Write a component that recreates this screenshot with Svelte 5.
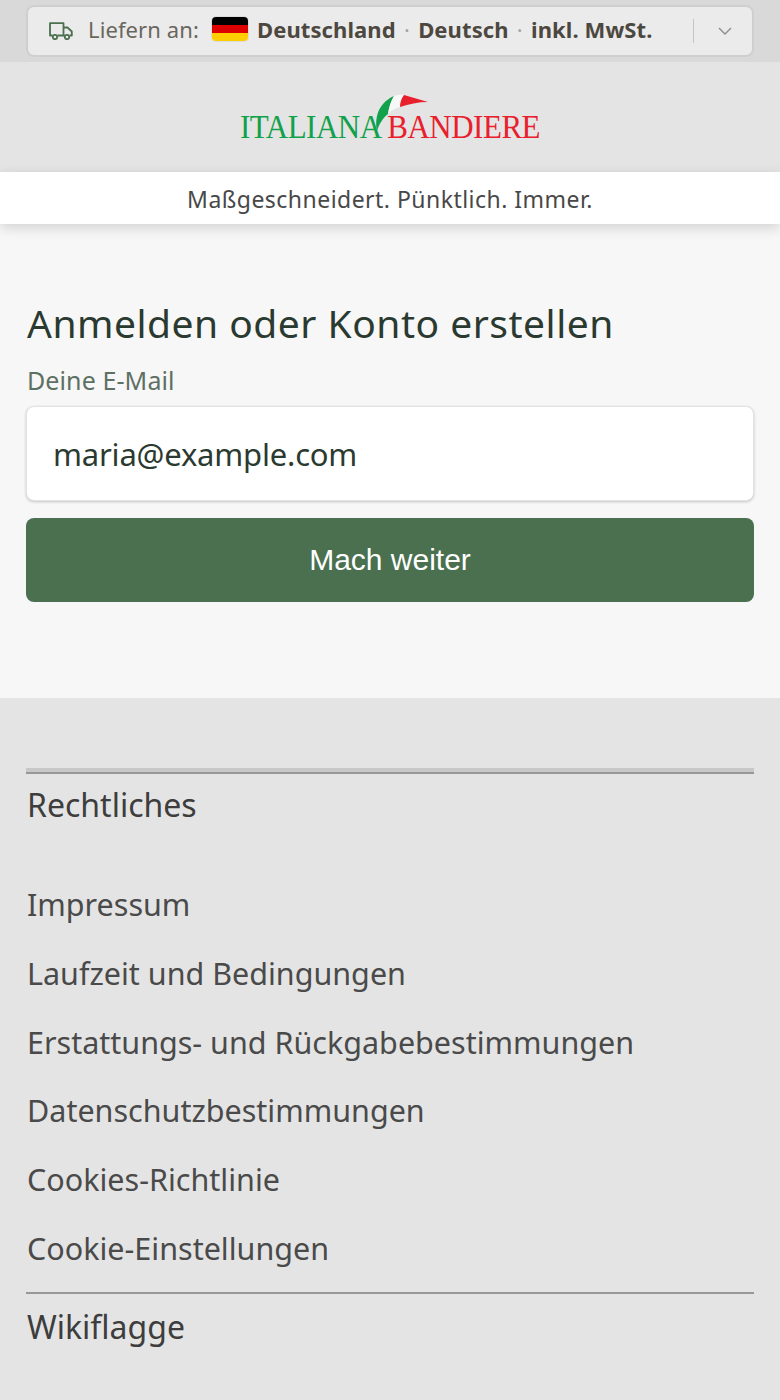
<script lang="ts">
	const legalLinks = [
		'Impressum',
		'Laufzeit und Bedingungen',
		'Erstattungs- und Rückgabebestimmungen',
		'Datenschutzbestimmungen',
		'Cookies-Richtlinie',
		'Cookie-Einstellungen',
	];
</script>

<div class="page">
	<div class="topbar">
		<div class="locale">
			<svg class="truck" viewBox="0 0 24 18" width="24" height="18" fill="none" stroke="#4a7050" stroke-width="1.8" stroke-linejoin="round">
				<path d="M3.6 13.5H1V1.2H14.5V13.5H8.6" />
				<path d="M14.5 5.5H18.5L22.8 9.5V13.5H20.6M14.5 13.5H15.6" />
				<circle cx="6" cy="15" r="2.2" />
				<circle cx="18" cy="15" r="2.2" />
			</svg>
			<span class="ship">Liefern an:</span>
			<span class="flag"><i class="black"></i><i class="red"></i><i class="gold"></i></span>
			<strong>Deutschland</strong>
			<span class="dot">·</span>
			<strong>Deutsch</strong>
			<span class="dot">·</span>
			<strong>inkl. MwSt.</strong>
			<span class="sep"></span>
			<svg class="chev" viewBox="0 0 14 8" width="14" height="8" fill="none" stroke="#8c8c8c" stroke-width="1.4">
				<path d="M1 1l6 6 6-6" />
			</svg>
		</div>
	</div>

	<header class="brand">
		<div class="logo">
			<span class="green">ITALIANA</span>
			<span class="red-text">BANDIERE</span>
			<svg class="swoosh" viewBox="0 0 56 42" width="56" height="42">
				<path d="M2 38C0 28 1 11 19 3C16 8 14 14 13 21C8 25 4 31 2 38Z" fill="#12a14b" />
				<path d="M19 3C22 2 26 1.5 29 2C26 6 25 10 25 14C20 15 17 17 13 21C14 14 16 8 19 3Z" fill="#f8f8f8" />
				<path d="M29 2L53 9C43 9 34 11 25 14C25 10 26 6 29 2Z" fill="#e8202c" />
			</svg>
		</div>
	</header>

	<div class="tagline">Maßgeschneidert. Pünktlich. Immer.</div>

	<main class="login">
		<h1>Anmelden oder Konto erstellen</h1>
		<label for="email">Deine E-Mail</label>
		<input id="email" type="email" value="maria@example.com" />
		<button type="button">Mach weiter</button>
	</main>

	<footer>
		<section class="legal">
			<h2>Rechtliches</h2>
			<ul>
				{#each legalLinks as link}
					<li><a href="#top">{link}</a></li>
				{/each}
			</ul>
		</section>
		<section class="wiki">
			<h2>Wikiflagge</h2>
		</section>
	</footer>
</div>

<style>
	:global(body) {
		margin: 0;
		background: #e4e4e4;
	}

	.page {
		width: 780px;
		height: 1400px;
		overflow: hidden;
		background: #e4e4e4;
		font-family: "Noto Sans", "Open Sans", sans-serif;
		color: #3d3d3d;
	}

	.topbar {
		height: 62px;
		box-sizing: border-box;
		padding: 5px 26px 0;
		background: #d9d9d9;
	}

	.locale {
		height: 52px;
		box-sizing: border-box;
		display: flex;
		align-items: center;
		padding: 0 20px 4px 20px;
		background: #ebebeb;
		border: 2px solid #cfcfcf;
		border-radius: 8px;
		font-size: 22px;
		letter-spacing: 0.1px;
		color: #4d483f;
	}

	.truck {
		flex: none;
		margin: 3px 16px 0 1px;
	}

	.ship {
		margin-left: -1px;
		color: #6a665e;
	}

	.flag {
		flex: none;
		width: 36px;
		height: 24px;
		margin: 0 9px 0 13px;
		display: flex;
		flex-direction: column;
		border-radius: 4px;
		overflow: hidden;
		box-shadow: 0 0 0 1px #dcdcdc;
	}

	.flag i {
		flex: 1;
	}

	.black {
		background: #000;
	}

	.red {
		background: #dd0000;
	}

	.gold {
		background: #ffce00;
	}

	strong {
		font-weight: 700;
	}

	.dot {
		margin: 0 8.2px;
		color: #a5a5a0;
	}

	.sep {
		width: 1px;
		height: 24px;
		margin: 4px 0 0 auto;
		background: #c4c4c4;
	}

	.chev {
		flex: none;
		margin: 4px 0 0 24px;
	}

	.brand {
		height: 110px;
		display: flex;
		justify-content: center;
		background: #e4e4e4;
	}

	.logo {
		position: relative;
		width: 300px;
		height: 40px;
		padding-top: 48px;
		display: flex;
		justify-content: space-between;
		font-family: "Liberation Serif", serif;
		font-size: 31px;
		line-height: 36px;
	}

	.logo span {
		display: inline-block;
		transform: scaleY(1.12);
		transform-origin: 50% 80%;
	}

	.green {
		color: #12a14b;
		letter-spacing: -0.5px;
	}

	.red-text {
		color: #e8202c;
		letter-spacing: -0.5px;
	}

	.swoosh {
		position: absolute;
		left: 135px;
		top: 31px;
	}

	.tagline {
		position: relative;
		height: 52px;
		line-height: 54px;
		text-align: center;
		font-size: 23px;
		letter-spacing: 0.47px;
		color: #484848;
		background: #fff;
		box-shadow: 0 4px 12px rgba(0, 0, 0, 0.15);
	}

	.login {
		height: 474px;
		box-sizing: border-box;
		padding: 74px 26px 0;
		background: #f7f7f7;
	}

	h1 {
		margin: 0;
		padding-left: 1px;
		font-size: 39px;
		line-height: 50px;
		font-weight: 400;
		letter-spacing: 0.5px;
		color: #2b3a30;
	}

	label {
		display: block;
		margin-top: 16px;
		padding-left: 1px;
		font-size: 25px;
		line-height: 32px;
		letter-spacing: 0.1px;
		color: #5d7063;
	}

	input {
		display: block;
		width: 100%;
		height: 95px;
		margin-top: 10px;
		box-sizing: border-box;
		padding: 0 26px;
		background: #fff;
		border: 1px solid #e2e2e2;
		border-radius: 8px;
		box-shadow: 0 1px 3px rgba(0, 0, 0, 0.2);
		font: inherit;
		font-size: 31px;
		letter-spacing: -0.2px;
		color: #2b3a30;
		outline: none;
	}

	button {
		display: block;
		width: 100%;
		height: 84px;
		margin-top: 17px;
		background: #4a7050;
		border: none;
		border-radius: 8px;
		font-family: "Liberation Sans", sans-serif;
		font-size: 30px;
		color: #fff;
	}

	footer {
		padding: 74px 26px 0;
	}

	section {
		border-top: 2px solid #979797;
	}

	.legal {
		box-shadow: 0 -4px 0 #c8c8c8;
	}

	h2 {
		margin: 0;
		padding-left: 1px;
		font-size: 32px;
		line-height: 62px;
		font-weight: 400;
		color: #3d3d3d;
	}

	.wiki {
		padding-top: 2px;
	}

	ul {
		list-style: none;
		margin: 0;
		padding: 34px 0 9px 1px;
	}

	li {
		height: 68.8px;
		font-size: 30.5px;
		line-height: 68px;
	}

	a {
		color: #4a4a4a;
		text-decoration: none;
	}
</style>
